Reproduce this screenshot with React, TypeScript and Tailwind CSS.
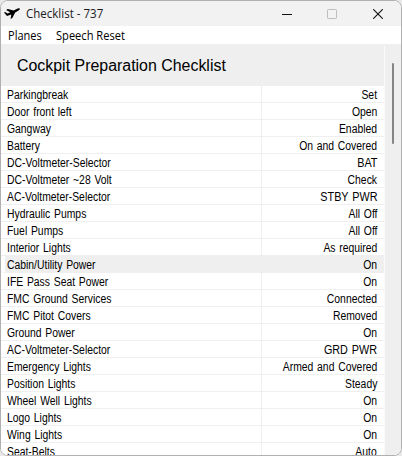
const rows: [string, string][] = [
  ['Parkingbreak', 'Set'],
  ['Door front left', 'Open'],
  ['Gangway', 'Enabled'],
  ['Battery', 'On and Covered'],
  ['DC-Voltmeter-Selector', 'BAT'],
  ['DC-Voltmeter ~28 Volt', 'Check'],
  ['AC-Voltmeter-Selector', 'STBY PWR'],
  ['Hydraulic Pumps', 'All Off'],
  ['Fuel Pumps', 'All Off'],
  ['Interior Lights', 'As required'],
  ['Cabin/Utility Power', 'On'],
  ['IFE Pass Seat Power', 'On'],
  ['FMC Ground Services', 'Connected'],
  ['FMC Pitot Covers', 'Removed'],
  ['Ground Power', 'On'],
  ['AC-Voltmeter-Selector', 'GRD PWR'],
  ['Emergency Lights', 'Armed and Covered'],
  ['Position Lights', 'Steady'],
  ['Wheel Well Lights', 'On'],
  ['Logo Lights', 'On'],
  ['Wing Lights', 'On'],
  ['Seat-Belts', 'Auto'],
];

function TitleBar() {
  return (
    <div className="flex h-[25px] shrink-0 items-center bg-[#f2f2f2] pl-[3px] font-['Open_Sans','Noto_Sans',sans-serif] text-[12px] text-[#1a1a1a]">
      <svg width="16" height="14" viewBox="0 0 16 14" className="mr-[6px] mt-px shrink-0" fill="#000">
        <path d="M0 5.4 L1.2 4.9 L3.6 6.6 L6.2 5.3 L2.1 2.9 L3.8 2.1 L9.6 3.5 L12.6 1.9 C14 1.2 15.4 1 15.8 1.7 C16.1 2.4 15.1 3.3 13.8 4 L11.2 5.4 L8.3 11.1 L6.6 12 L7.3 7.4 L3 8.9 Z" />
      </svg>
      <span className="flex-1 origin-left scale-x-[.96] whitespace-pre">Checklist - 737</span>
      <div className="flex items-center pr-[18px]">
        <svg width="10" height="10" viewBox="0 0 10 10" className="mr-[35px]">
          <path d="M0 5.5H10" stroke="#111" />
        </svg>
        <svg width="10" height="10" viewBox="0 0 10 10" className="mr-[36px]">
          <rect x=".5" y=".5" width="9" height="9" rx=".8" fill="none" stroke="#bdbdbd" />
        </svg>
        <svg width="10" height="10" viewBox="0 0 10 10">
          <path d="M.2.2L9.8 9.8M9.8.2L.2 9.8" stroke="#111" strokeWidth="1.1" />
        </svg>
      </div>
    </div>
  );
}

function MenuBar() {
  return (
    <div className="flex h-[18px] shrink-0 items-center bg-white pl-[7px] font-['Open_Sans','Noto_Sans',sans-serif] text-[12px] leading-[18px] text-black">
      <span className="w-[48px] origin-left scale-x-[.92] pt-[2px]">Planes</span>
      <span className="origin-left scale-x-[.925] whitespace-nowrap pt-[2px]">Speech Reset</span>
    </div>
  );
}

export default function App() {
  return (
    <div className="h-[456px] w-[402px] overflow-hidden bg-[#e8e8e8]">
      <div className="flex h-[456px] w-[402px] flex-col overflow-hidden rounded-[8px] border border-[#b0b0b0] bg-white">
        <TitleBar />
        <MenuBar />
        <div className="flex min-h-0 flex-1 bg-[#efefef]">
          <div className="w-[383px] overflow-hidden font-['Liberation_Sans',Arial,sans-serif] text-black">
            <div className="flex h-[42px] items-center pl-[16px] pt-[2px] text-[16px]">
              <span className="origin-left scale-x-[.995] whitespace-nowrap">Cockpit Preparation Checklist</span>
            </div>
            {rows.map(([name, state], i) => (
              <div
                key={i}
                className={`flex h-[17px] border-b border-[#efefef] text-[12px] leading-[19px] [word-spacing:1px] ${
                  i === 10 ? 'border-l-4 border-l-white bg-[#efefef] pl-px' : 'bg-white pl-[5px]'
                }`}
              >
                <div className="w-[256px] border-r border-[#efefef] pl-px">
                  <span className="inline-block origin-left scale-x-[.865] whitespace-nowrap">{name}</span>
                </div>
                <div className="flex-1 pr-[7px] text-right">
                  <span
                    className={`inline-block origin-right whitespace-nowrap ${
                      state === state.toUpperCase() ? 'scale-x-[.9]' : 'scale-x-[.865]'
                    }`}
                  >
                    {state}
                  </span>
                </div>
              </div>
            ))}
          </div>
          <div className="mt-[2px] w-px bg-[#fafafa]" />
          <div className="ml-[7px] mt-[19px] h-[81px] w-[2px] rounded-full bg-[#858585]" />
        </div>
      </div>
    </div>
  );
}
